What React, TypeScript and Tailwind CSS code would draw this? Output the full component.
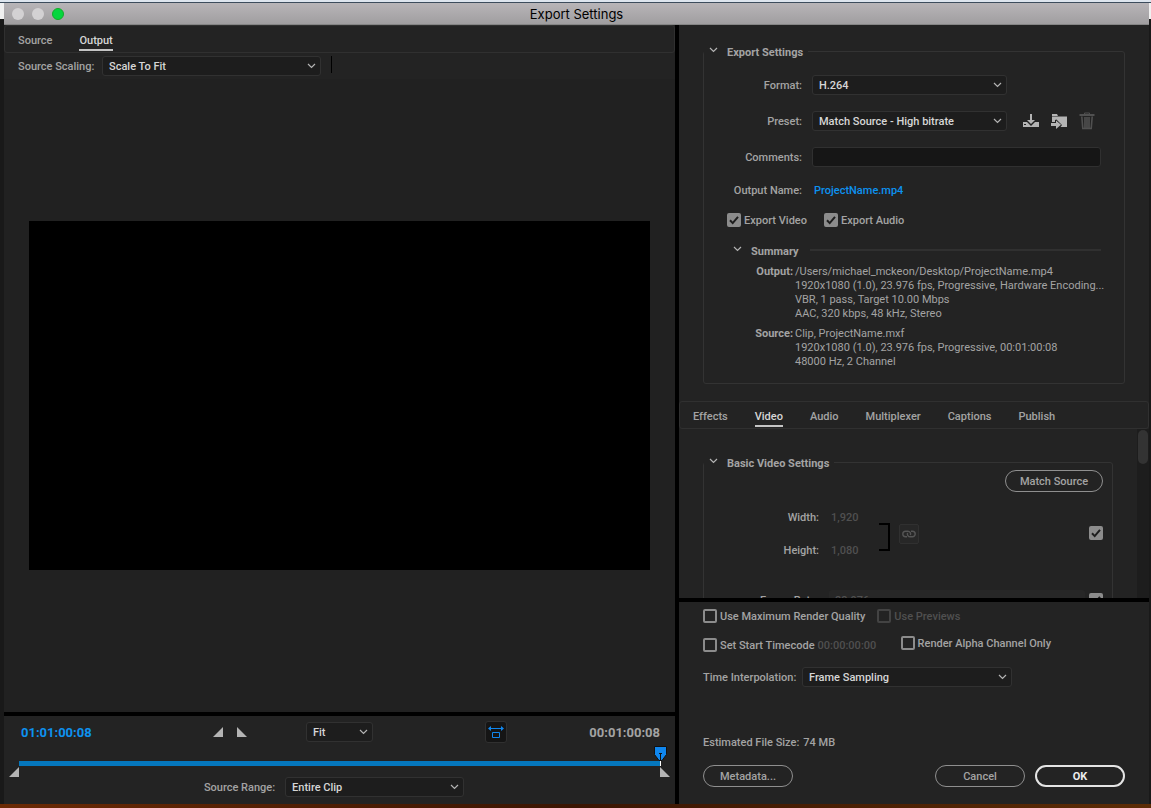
import type { ReactNode } from "react";

function Chevron({ className = "" }: { className?: string }) {
  return (
    <svg className={className} width="9" height="6" viewBox="0 0 9 6" fill="none" stroke="#b4b4b4" strokeWidth="1.2" aria-hidden="true">
      <path d="M1 1l3.5 3.5L8 1" />
    </svg>
  );
}

function Select({ id, value, label, className = "" }: { id: string; value: string; label?: string; className?: string }) {
  return (
    <div className={`relative h-5 ${className}`}>
      <select
        id={id}
        aria-label={label}
        className="block h-5 w-full appearance-none rounded-[3px] border border-[#313131] bg-[#1d1d1d] pt-0.5 pr-4 pl-[6px] leading-4 text-[#d6d6d6]"
      >
        <option>{value}</option>
      </select>
      <Chevron className="pointer-events-none absolute top-[7px] right-[5px]" />
    </div>
  );
}

function Checkbox({ label, checked, disabled, ariaLabel }: { label?: string; checked?: boolean; disabled?: boolean; ariaLabel?: string }) {
  return (
    <label className={`flex h-[14px] items-center gap-[3px] whitespace-nowrap ${disabled ? "text-[#505050]" : "text-[#a3a3a3]"}`}>
      <span className="relative h-[14px] w-[14px] shrink-0">
        <input
          type="checkbox"
          aria-label={ariaLabel}
          defaultChecked={checked}
          disabled={disabled}
          className="peer block h-[14px] w-[14px] appearance-none rounded-[2px] border-2 border-[#8c8c8c] checked:bg-[#8c8c8c] disabled:border-[#434343]"
        />
        <svg
          className="pointer-events-none invisible absolute top-0 left-0 peer-checked:visible"
          width="14"
          height="14"
          viewBox="0 0 14 14"
          fill="none"
          stroke="#1e1e1e"
          strokeWidth="2"
          aria-hidden="true"
        >
          <path d="M3 7.3l2.7 2.8L11 3.8" />
        </svg>
      </span>
      {label && <span className="pt-0.5">{label}</span>}
    </label>
  );
}

function TabBar({ tabs, active }: { tabs: string[]; active: string }) {
  return (
    <div role="tablist" className="flex h-7 shrink-0 gap-[27px] rounded-[3px] border border-[#303030] px-[13px]">
      {tabs.map((tab) => (
        <button
          key={tab}
          type="button"
          role="tab"
          aria-selected={tab === active}
          className={`mt-[5px] h-5 border-b-2 pt-0.5 leading-4 ${tab === active ? "border-[#c4c4c4] text-[#d6d6d6]" : "border-transparent text-[#a3a3a3]"}`}
        >
          {tab}
        </button>
      ))}
    </div>
  );
}

function Pill({ children, primary, className = "" }: { children: ReactNode; primary?: boolean; className?: string }) {
  return (
    <button
      type="button"
      className={`flex h-[22px] items-center justify-center rounded-full pt-0.5 ${
        primary ? "border-2 border-[#e4e4e4] font-bold text-[#ececec]" : "border border-[#8f8f8f] text-[#a3a3a3]"
      } ${className}`}
    >
      {children}
    </button>
  );
}

function GroupLegend({ children }: { children: ReactNode }) {
  return (
    <legend className="h-[18px] px-[5px] font-bold leading-[18px]">
      <button type="button" className="flex items-center gap-[9px]">
        <Chevron className="-mt-1" />
        <span className="pt-0.5">{children}</span>
      </button>
    </legend>
  );
}

function FormRow({ id, label, children }: { id: string; label: string; children: ReactNode }) {
  return (
    <div className="flex h-5 items-center">
      <label htmlFor={id} className="mr-[10px] w-[98px] pt-0.5 text-right">
        {label}
      </label>
      {children}
    </div>
  );
}

function PreviewPanel() {
  return (
    <section className="flex min-w-0 flex-1 flex-col">
      <TabBar tabs={["Source", "Output"]} active="Output" />
      <div className="flex h-[26px] items-start pt-[3px] pl-[14px]">
        <label htmlFor="scaling" className="w-[84px] pt-0.5 leading-[18px]">
          Source Scaling:
        </label>
        <Select id="scaling" value="Scale To Fit" className="w-[219px]" />
        <div className="ml-[10px] h-[17px] w-px bg-black" />
      </div>
      <div className="flex min-h-0 flex-1 items-center justify-center bg-[#212121] px-[25px]">
        <div className="aspect-video w-full bg-black" />
      </div>
      <div className="h-1 bg-black" />
      <div className="flex items-center pt-[5px] pr-[15px] pl-[17px]">
        <span className="w-[192px] pt-0.5 text-[13px] font-bold text-[#0d92f0]">01:01:00:08</span>
        <button type="button" aria-label="Set in point">
          <svg width="10" height="10" viewBox="0 0 10 10" fill="#b4b4b4"><path d="M10 0v10H0z" /></svg>
        </button>
        <button type="button" aria-label="Set out point" className="ml-[14px]">
          <svg width="10" height="10" viewBox="0 0 10 10" fill="#b4b4b4"><path d="M0 0v10h10z" /></svg>
        </button>
        <Select id="zoom" label="Zoom level" value="Fit" className="ml-[59px] w-[67px]" />
        <button
          type="button"
          aria-label="Aspect ratio correction"
          className="ml-[112px] flex h-[22px] w-[22px] items-center justify-center rounded-[3px] border border-[#303030] bg-[#151515]"
        >
          <svg width="16" height="14" viewBox="0 0 16 14" fill="none" stroke="#1087ee">
            <path d="M2 3.5h12M4.500 7.500h7v5h-7z" />
            <path d="M0 3.500L3 1v5zM16 3.500L13 1v5z" fill="#1087ee" stroke="none" />
          </svg>
        </button>
        <span className="ml-auto pt-0.5 text-[13px] font-bold">00:01:00:08</span>
      </div>
      <div className="relative mr-[15px] ml-[15px] h-[34px] pt-[18px]">
        <div className="h-[5px] bg-[#0577bd]" />
        <svg className="absolute top-6 -left-[10px]" width="10" height="10" viewBox="0 0 10 10" fill="#b4b4b4" aria-hidden="true"><path d="M10 0v10H0z" /></svg>
        <svg className="absolute top-6 -right-[10px]" width="10" height="10" viewBox="0 0 10 10" fill="#b4b4b4" aria-hidden="true"><path d="M0 0v10h10z" /></svg>
        <svg className="absolute top-[3px] -right-[7px]" width="13" height="20" viewBox="0 0 13 20" aria-hidden="true">
          <path d="M.5.5h12v8l-4.5 6H5L.5 8.500z" fill="#1087ee" stroke="#111" />
          <path d="M5 7h3v1H7v7H6V8H5z" fill="#111" />
          <path d="M6 15h1v5H6z" fill="#fff" />
        </svg>
      </div>
      <div className="mb-[7px] flex justify-center pr-[11px]">
        <label htmlFor="range" className="mr-[10px] pt-0.5 leading-[18px]">
          Source Range:
        </label>
        <Select id="range" value="Entire Clip" className="w-[179px]" />
      </div>
    </section>
  );
}

function PresetActions() {
  return (
    <div className="ml-[15px] flex items-center gap-[10px]">
      <button type="button" aria-label="Save preset">
        <svg width="18" height="18" viewBox="0 0 18 18" fill="#b4b4b4">
          <path d="M1 10h4l4 4 4-4h4v5H1zM2 12v1h2v-1z" fillRule="evenodd" />
          <path d="M8 2h2v6h3l-4 4-4-4h3z" />
        </svg>
      </button>
      <button type="button" aria-label="Import preset">
        <svg width="18" height="18" viewBox="0 0 18 18" fill="#b4b4b4">
          <path d="M2 2h5l1 2H2zM2 4.500h15V15h-6.500l1.500-2-5.500-5.500-1.500.5v2H2z" />
          <path d="M1 11h5V8.500l5 4.300-5 4.200V14H1z" />
        </svg>
      </button>
      <button type="button" aria-label="Delete preset" disabled>
        <svg width="18" height="18" viewBox="0 0 18 18" fill="none" stroke="#505050">
          <path d="M6.500 2.500V1h5v1.500" />
          <path d="M1.500 3h15" strokeWidth="2" />
          <path d="M3.800 4.500l1 12h8.400l1-12M7 5v11M9 5v11M11 5v11" strokeWidth="1.600" />
        </svg>
      </button>
    </div>
  );
}

function ExportGroup() {
  return (
    <fieldset className="mx-6 mt-[17px] mb-[17px] min-w-0 rounded-[3px] border border-[#333]">
      <GroupLegend>Export Settings</GroupLegend>
      <div className="flex flex-col gap-4 pt-[15px]">
        <FormRow id="format" label="Format:">
          <Select id="format" value="H.264" className="w-[195px]" />
        </FormRow>
        <FormRow id="preset" label="Preset:">
          <Select id="preset" value="Match Source - High bitrate" className="w-[195px]" />
          <PresetActions />
        </FormRow>
        <FormRow id="comments" label="Comments:">
          <input id="comments" type="text" className="mr-[23px] h-5 min-w-0 flex-1 rounded-[3px] border border-[#303030] bg-[#161616] px-[6px]" />
        </FormRow>
      </div>
      <div className="mt-[13px] flex h-5 items-center pt-0.5">
        <span className="mr-3 w-[98px] text-right">Output Name:</span>
        <a href="#output" className="text-[#0d92f0]">ProjectName.mp4</a>
      </div>
      <div className="mt-[13px] ml-[23px] flex gap-[17px]">
        <Checkbox label="Export Video" checked />
        <Checkbox label="Export Audio" checked />
      </div>
      <div className="mt-[14px] mr-[23px] ml-[29px] flex h-[18px] items-center">
        <button type="button" className="flex items-center gap-[9px] font-bold">
          <Chevron className="-mt-[3px]" />
          <span className="pt-1">Summary</span>
        </button>
        <div className="ml-[11px] h-[2px] flex-1 bg-[#303030]" />
      </div>
      <dl className="mt-[6px] mr-5 ml-[46px] grid grid-cols-[43px_1fr] gap-y-[6px] leading-[14px] font-normal">
        <dt className="text-right font-bold">Output:</dt>
        <dd className="pl-[2px] whitespace-nowrap">
          <div>/Users/michael_mckeon/Desktop/ProjectName.mp4</div>
          <div>1920x1080 (1.0), 23.976 fps, Progressive, Hardware Encoding...</div>
          <div>VBR, 1 pass, Target 10.00 Mbps</div>
          <div>AAC, 320 kbps, 48 kHz, Stereo</div>
        </dd>
        <dt className="text-right font-bold">Source:</dt>
        <dd className="pl-[2px] whitespace-nowrap">
          <div>Clip, ProjectName.mxf</div>
          <div>1920x1080 (1.0), 23.976 fps, Progressive, 00:01:00:08</div>
          <div>48000 Hz, 2 Channel</div>
        </dd>
      </dl>
      <div className="h-[14px]" />
    </fieldset>
  );
}

function VideoGroup() {
  return (
    <div className="flex min-h-0 flex-1 overflow-hidden">
      <div className="min-w-0 flex-1 overflow-hidden pt-6 pr-6 pl-6">
        <fieldset className="h-[220px] min-w-0 rounded-[3px] border border-[#333] pr-[9px]">
          <GroupLegend>Basic Video Settings</GroupLegend>
          <div className="-mt-px flex justify-end">
            <Pill className="w-[98px]">Match Source</Pill>
          </div>
          <div className="mt-4 flex items-center">
            <div className="grid grid-cols-[115px_48px] gap-x-3 gap-y-[13px] leading-5">
              <span className="text-right">Width:</span>
              <span className="text-[#505050]">1,920</span>
              <span className="text-right">Height:</span>
              <span className="text-[#505050]">1,080</span>
            </div>
            <div className="mt-1 h-7 w-[11px] border-2 border-l-0 border-black" />
            <button
              type="button"
              aria-label="Link dimensions"
              disabled
              className="mb-0.5 ml-[9px] flex h-5 w-5 items-center justify-center rounded-[2px] border border-[#303030] bg-[#272727]"
            >
              <svg width="14" height="8" viewBox="0 0 14 8" fill="none" stroke="#555" strokeWidth="1.400">
                <path d="M5 6.800H3.600a2.800 2.800 0 0 1 0-5.600h2.200a2.800 2.800 0 0 1 2.600 3.900" />
                <path d="M9 1.200h1.400a2.800 2.800 0 0 1 0 5.600H8.200a2.800 2.800 0 0 1-2.600-3.900" />
              </svg>
            </button>
            <div className="mb-1 ml-auto">
              <Checkbox ariaLabel="Match source frame size" checked />
            </div>
          </div>
          <div className="mt-[29px] flex h-5 items-center">
            <label htmlFor="rate" className="mr-[10px] w-[115px] pt-0.5 text-right">Frame Rate:</label>
            <select id="rate" disabled className="mr-1 h-5 min-w-0 flex-1 appearance-none rounded-[3px] bg-[#272727] px-[6px] pt-0.5 text-[#505050]">
              <option>23.976</option>
            </select>
            <Checkbox ariaLabel="Match source frame rate" checked />
          </div>
        </fieldset>
      </div>
      <div className="w-3 bg-[#1d1d1d] px-px pt-px">
        <div className="h-[34px] rounded-full bg-[#333]" />
      </div>
    </div>
  );
}

function RenderOptions() {
  return (
    <div className="h-[202px] shrink-0 px-6 pt-[7px]">
      <div className="flex gap-3">
        <Checkbox label="Use Maximum Render Quality" />
        <Checkbox label="Use Previews" disabled />
      </div>
      <div className="mt-[14px] flex h-4 items-center">
        <Checkbox label="Set Start Timecode" />
        <span className="ml-[3px] w-[83px] pt-0.5 text-[#505050]">00:00:00:00</span>
        <div className="pb-1">
          <Checkbox label="Render Alpha Channel Only" />
        </div>
      </div>
      <div className="mt-[14px] flex h-5 items-center">
        <label htmlFor="interp" className="w-[99px] pt-0.5 whitespace-nowrap">Time Interpolation:</label>
        <Select id="interp" value="Frame Sampling" className="w-[210px]" />
      </div>
      <div className="mt-[45px] flex h-5 items-center gap-1 pt-0.5">
        <span>Estimated File Size:</span>
        <span>74 MB</span>
      </div>
      <div className="mt-[13px] flex">
        <Pill className="w-[90px]">Metadata...</Pill>
        <Pill className="mr-[10px] ml-auto w-[90px]">Cancel</Pill>
        <Pill primary className="w-[90px]">OK</Pill>
      </div>
    </div>
  );
}

export default function App() {
  return (
    <div className="flex h-screen min-h-[700px] w-full flex-col overflow-hidden bg-[#1a1a1a] font-['Roboto','Noto_Sans',sans-serif] text-[11px] leading-4 font-medium text-[#a3a3a3]">
      <div className="h-[3px] shrink-0 border-b border-[#3c4c5c] bg-[#dde5ee]" />
      <div className="flex min-h-0 flex-1">
        <div className="w-1 shrink-0 border-t-[16px] border-[#f0f0f0] bg-[#191919]" />
        <main className="flex min-w-0 flex-1 flex-col overflow-hidden bg-[#232323]">
          <header className="flex h-[22px] shrink-0 items-center border-b border-[#858585] bg-linear-to-b from-[#b8b5b8] to-[#a09ea0] px-2">
            <div className="flex flex-1 gap-2">
              <span className="h-3 w-3 rounded-full bg-[#d3d1d3]" />
              <span className="h-3 w-3 rounded-full bg-[#d3d1d3]" />
              <span className="h-3 w-3 rounded-full border border-[#12ac28] bg-[#05d63e]" />
            </div>
            <h1 className="font-['Inter',sans-serif] text-[13px] font-normal text-black">Export Settings</h1>
            <div className="flex-1" />
          </header>
          <div className="flex min-h-0 flex-1">
            <PreviewPanel />
            <div className="w-1 shrink-0 bg-black" />
            <section className="flex w-[470px] shrink-0 flex-col">
              <ExportGroup />
              <TabBar tabs={["Effects", "Video", "Audio", "Multiplexer", "Captions", "Publish"]} active="Video" />
              <VideoGroup />
              <div className="h-1 shrink-0 bg-black" />
              <RenderOptions />
            </section>
          </div>
        </main>
        <div className="w-[2px] shrink-0 border-t-[16px] border-[#f0f0f0] bg-[#191919]" />
      </div>
      <div className="h-1 shrink-0 bg-linear-to-r from-[#6b2a05] via-[#3a1503] to-[#5c2c06]" />
    </div>
  );
}
